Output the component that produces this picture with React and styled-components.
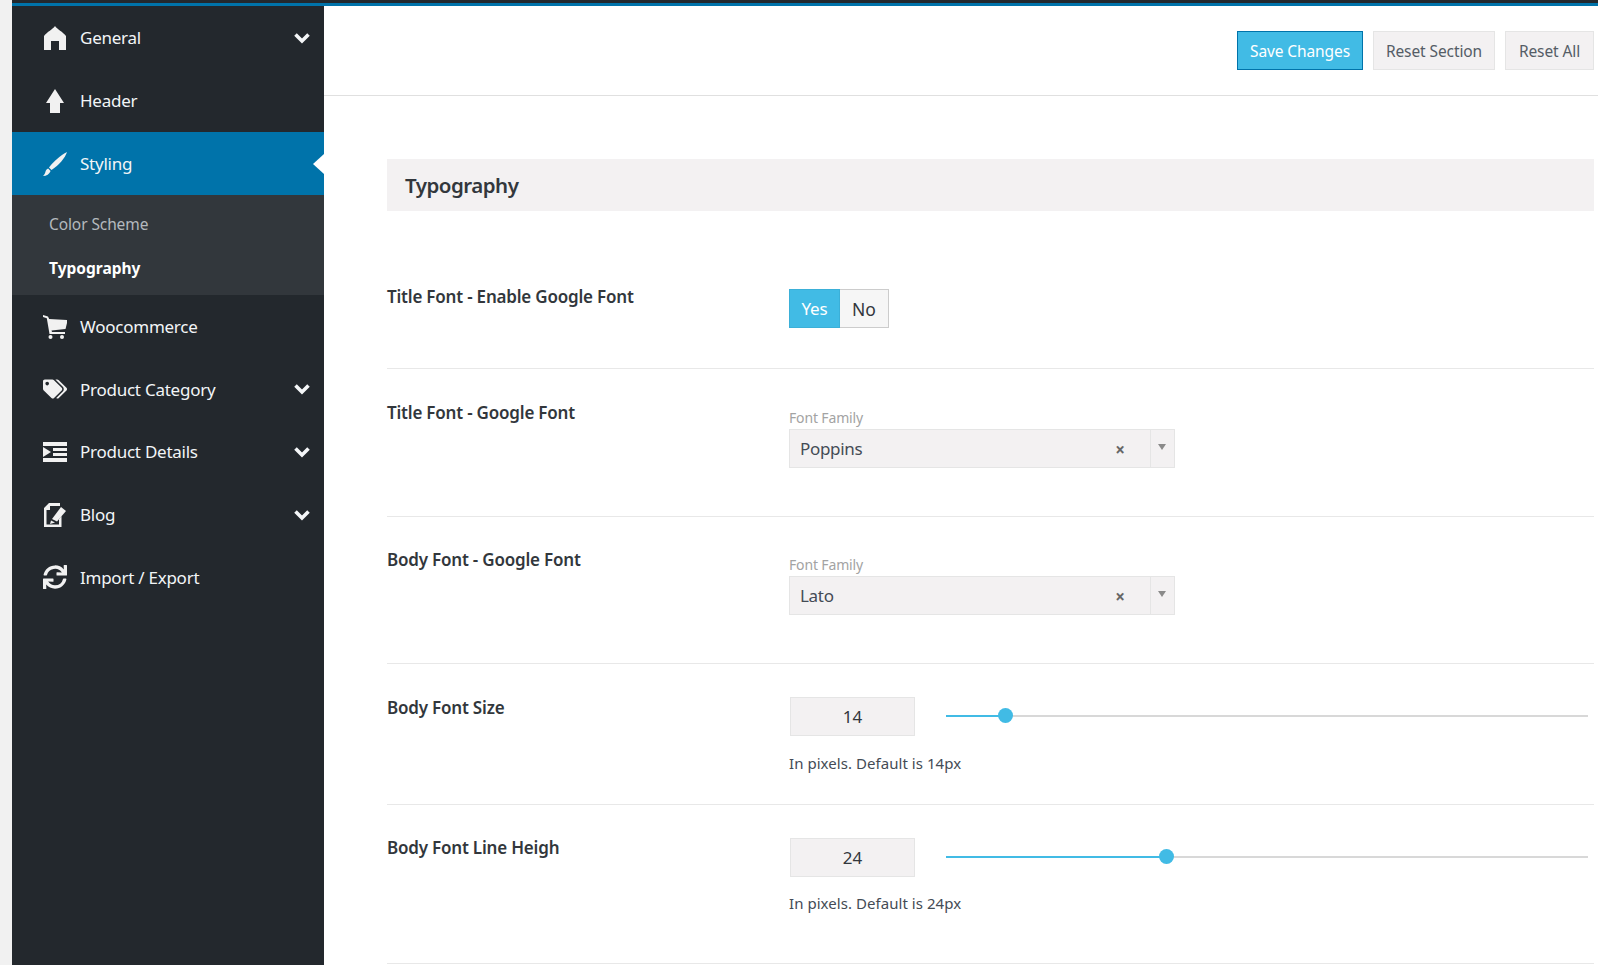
import React from "react";
import styled, { createGlobalStyle } from "styled-components";
import { FaTags, FaSync } from "react-icons/fa";

const GlobalStyle = createGlobalStyle`
  html, body {
    margin: 0;
    padding: 0;
    height: 100%;
    overflow: hidden;
    background: #f1f1f1;
    font-family: "Noto Sans", "Open Sans", sans-serif;
  }
  * { box-sizing: border-box; }
`;

const HomeIcon = () => (
  <svg width="24" height="24" viewBox="0 0 24 24" fill="currentColor">
    <path d="M12 0 C14 3 20 6 23 10 L23 24 L16 24 L16 15 L8 15 L8 24 L1 24 L1 10 C4 6 10 3 12 0 Z" />
  </svg>
);

const ArrowIcon = () => (
  <svg width="24" height="24" viewBox="0 0 24 24" fill="currentColor">
    <path d="M12 0 L21 14 L17 14 L17 24 L7 24 L7 14 L3 14 Z" />
  </svg>
);

const BrushIcon = () => (
  <svg width="24" height="24" viewBox="0 0 24 24" fill="currentColor">
    <path d="M24 0 C22 6 16 13 8.5 18 L6 15.5 C11 9 18 3 24 0 Z" />
    <path d="M5.2 16.5 L7.6 18.9 C6.5 22 3.5 24 0 24 C1.5 22.5 2 21.5 2.4 20 C2.8 18.2 3.8 17 5.2 16.5 Z" />
  </svg>
);

const CartIcon = () => (
  <svg width="24" height="24" viewBox="0 0 24 24" fill="currentColor">
    <path d="M0 0 L5 1.5 L6.2 4 L24 5 L24 8 L22.5 14 L8.5 15.5 L9 17 L22 17 L22 19 L6.5 19 L3.8 3.2 L0 2 Z" />
    <circle cx="7.5" cy="22" r="2" />
    <circle cx="19" cy="22" r="2" />
  </svg>
);

const IndentIcon = () => (
  <svg width="24" height="20" viewBox="0 0 24 20" fill="currentColor">
    <path d="M0 0 H24 V4 H0 Z" />
    <path d="M10 6 H24 V9 H10 Z" />
    <path d="M10 11 H24 V14 H10 Z" />
    <path d="M0 16 H24 V20 H0 Z" />
    <path d="M0 5 L8 10 L0 15 Z" />
  </svg>
);

const EditIcon = () => (
  <svg width="24" height="24" viewBox="0 0 24 24" fill="currentColor">
    <path d="M1 5 L6 0 L17 0 L17 3 L7 3 L7 7 L3.5 7 L3.5 21.5 L16 21.5 L16 16 L18.5 13 L18.5 24 L1 24 Z" />
    <path d="M18 4 L23 8 L14 18.5 L9 16 Z" />
    <path d="M8 17.5 L12 19.5 L7 21 Z" />
  </svg>
);

const ChevronIcon = () => (
  <svg width="16" height="12" viewBox="0 0 16 12" fill="none" stroke="currentColor" strokeWidth="3.6">
    <path d="M1.5 2.5 L8 9 L14.5 2.5" />
  </svg>
);

const menuTop = [
  { label: "General", icon: <HomeIcon />, chevron: true },
  { label: "Header", icon: <ArrowIcon /> },
];

const menuBottom = [
  { label: "Woocommerce", icon: <CartIcon /> },
  { label: "Product Category", icon: <FaTags size={24} />, chevron: true },
  { label: "Product Details", icon: <IndentIcon />, chevron: true },
  { label: "Blog", icon: <EditIcon />, chevron: true },
  { label: "Import / Export", icon: <FaSync size={24} /> },
];

const MenuRow = ({ item, active }) => (
  <MenuItem $active={active}>
    <IconSlot>{item.icon}</IconSlot>
    <MenuLabel>{item.label}</MenuLabel>
    {item.chevron && (
      <ChevronSlot>
        <ChevronIcon />
      </ChevronSlot>
    )}
  </MenuItem>
);

const FontSelect = ({ value }) => (
  <>
    <FieldCaption>Font Family</FieldCaption>
    <SelectBox>
      <SelectValue>{value}</SelectValue>
      <ClearMark>×</ClearMark>
      <SelectArrow />
    </SelectBox>
  </>
);

const Slider = ({ value, percent, help, top, gap }) => (
  <>
    <SliderRow $top={top}>
      <NumberBox>{value}</NumberBox>
      <Track>
        <TrackFill style={{ width: percent + "%" }} />
        <Thumb style={{ left: percent + "%" }} />
      </Track>
    </SliderRow>
    <HelpText $gap={gap}>{help}</HelpText>
  </>
);

export default function App() {
  return (
    <Page>
      <GlobalStyle />
      <TopBar />
      <Shell>
        <Sidebar>
          {menuTop.map((item) => (
            <MenuRow key={item.label} item={item} />
          ))}
          <MenuRow item={{ label: "Styling", icon: <BrushIcon /> }} active />
          <SubMenu>
            <SubItem>Color Scheme</SubItem>
            <SubItem $current>Typography</SubItem>
          </SubMenu>
          <BottomMenu>
            {menuBottom.map((item) => (
              <MenuRow key={item.label} item={item} />
            ))}
          </BottomMenu>
        </Sidebar>
        <Main>
          <ActionBar>
            <PrimaryButton>Save Changes</PrimaryButton>
            <PlainButton $width={122}>Reset Section</PlainButton>
            <PlainButton $width={89}>Reset All</PlainButton>
          </ActionBar>
          <Content>
            <SectionTitle>Typography</SectionTitle>
            <Option $height={158} $top={74}>
              <OptionLabel>Title Font - Enable Google Font</OptionLabel>
              <OptionField>
                <Toggle>
                  <ToggleYes>Yes</ToggleYes>
                  <ToggleNo>No</ToggleNo>
                </Toggle>
              </OptionField>
            </Option>
            <Option $height={148} $top={32}>
              <OptionLabel>Title Font - Google Font</OptionLabel>
              <OptionField>
                <FontSelect value="Poppins" />
              </OptionField>
            </Option>
            <Option $height={147} $top={31}>
              <OptionLabel>Body Font - Google Font</OptionLabel>
              <OptionField>
                <FontSelect value="Lato" />
              </OptionField>
            </Option>
            <Option $height={141} $top={32}>
              <OptionLabel>Body Font Size</OptionLabel>
              <OptionField>
                <Slider value="14" percent={9.2} top={1} gap={16} help="In pixels. Default is 14px" />
              </OptionField>
            </Option>
            <Option $height={159} $top={31}>
              <OptionLabel>Body Font Line Heigh</OptionLabel>
              <OptionField>
                <Slider value="24" percent={34.4} top={2} gap={15} help="In pixels. Default is 24px" />
              </OptionField>
            </Option>
          </Content>
        </Main>
      </Shell>
    </Page>
  );
}

const Page = styled.div`
  height: 965px;
  padding-left: 12px;
  display: flex;
  flex-direction: column;
  overflow: hidden;
`;

const TopBar = styled.div`
  height: 6px;
  flex: none;
  background: #23282d;
  border-bottom: 3px solid #0073aa;
`;

const Shell = styled.div`
  flex: 1;
  display: flex;
  min-height: 0;
`;

const Sidebar = styled.nav`
  width: 312px;
  flex: none;
  background: #23282d;
`;

const MenuItem = styled.div`
  position: relative;
  height: 63px;
  display: flex;
  align-items: center;
  padding-left: 31px;
  color: #f2f5f7;
  background: ${(p) => (p.$active ? "#0073aa" : "transparent")};

  ${(p) =>
    p.$active &&
    `
    &::after {
      content: "";
      position: absolute;
      right: 0;
      top: 50%;
      margin-top: -10px;
      border-top: 10px solid transparent;
      border-bottom: 10px solid transparent;
      border-right: 11px solid #ffffff;
    }
  `}
`;

const BottomMenu = styled.div`
  padding-top: 0.5px;

  ${MenuItem} {
    height: 62.6px;
  }
`;

const IconSlot = styled.span`
  width: 24px;
  height: 24px;
  flex: none;
  display: flex;
  align-items: center;
  justify-content: center;
  color: #f1f1f1;
`;

const MenuLabel = styled.span`
  margin-left: 13px;
  font-size: 17px;
  letter-spacing: -0.25px;
`;

const ChevronSlot = styled.span`
  margin-left: auto;
  margin-right: 14px;
  display: flex;
  color: #f4f6f8;
`;

const SubMenu = styled.div`
  height: 100px;
  padding-top: 7px;
  background: #32373c;
`;

const SubItem = styled.div`
  height: 44px;
  display: flex;
  align-items: center;
  padding-left: 37px;
  font-size: 15.5px;
  letter-spacing: ${(p) => (p.$current ? "0" : "-0.1px")};
  font-weight: ${(p) => (p.$current ? 700 : 400)};
  color: ${(p) => (p.$current ? "#ffffff" : "#b4b9be")};
`;

const Main = styled.main`
  flex: 1;
  min-width: 0;
  background: #ffffff;
`;

const ActionBar = styled.div`
  height: 90px;
  display: flex;
  justify-content: flex-end;
  gap: 10px;
  padding: 25px 4px 0 0;
  border-bottom: 1px solid #e0e0e0;
`;

const PrimaryButton = styled.div`
  width: 126px;
  height: 39px;
  display: flex;
  align-items: center;
  justify-content: center;
  background: #41bbe5;
  border: 1px solid #0073aa;
  color: #ffffff;
  font-size: 15.5px;
  letter-spacing: -0.1px;
`;

const PlainButton = styled.div`
  width: ${(p) => p.$width}px;
  height: 39px;
  display: flex;
  align-items: center;
  justify-content: center;
  background: #f3f1f2;
  border: 1px solid #e5e5e5;
  color: #555d66;
  font-size: 15.5px;
  letter-spacing: -0.1px;
`;

const Content = styled.div`
  padding: 63px 4px 0 63px;
`;

const SectionTitle = styled.h2`
  margin: 0;
  height: 52px;
  display: flex;
  align-items: center;
  padding-left: 18px;
  background: #f3f1f2;
  color: #32373c;
  font-size: 20.5px;
  font-weight: 600;
  letter-spacing: -0.5px;
`;

const Option = styled.section`
  height: ${(p) => p.$height}px;
  display: flex;
  padding-top: ${(p) => p.$top}px;
  border-bottom: 1px solid #e8e8e8;
`;

const OptionLabel = styled.div`
  width: 402px;
  flex: none;
  color: #32373c;
  font-size: 17px;
  font-weight: 600;
  letter-spacing: -0.2px;
  line-height: 24px;
`;

const OptionField = styled.div`
  flex: 1;
  min-width: 0;
`;

const Toggle = styled.div`
  display: flex;
  width: 100px;
  height: 39px;
  margin-top: 4px;
`;

const ToggleYes = styled.div`
  width: 51px;
  display: flex;
  align-items: center;
  justify-content: center;
  background: #41bbe5;
  border: 1px solid #3bb0d8;
  color: #ffffff;
  font-size: 17px;
  letter-spacing: -0.2px;
`;

const ToggleNo = styled.div`
  flex: 1;
  display: flex;
  align-items: center;
  justify-content: center;
  background: #f6f6f6;
  border: 1px solid #cccccc;
  border-left: 0;
  color: #32373c;
  font-size: 17.5px;
`;

const FieldCaption = styled.div`
  height: 21px;
  margin-top: 7px;
  color: #a3a3a3;
  font-size: 14px;
  letter-spacing: -0.15px;
  line-height: 20px;
`;

const SelectBox = styled.div`
  position: relative;
  width: 386px;
  height: 39px;
  display: flex;
  align-items: center;
  padding-left: 10px;
  background: #f3f1f2;
  border: 1px solid #e5e5e5;
  color: #444b55;
  font-size: 17px;
  letter-spacing: -0.3px;
`;

const SelectValue = styled.span`
  flex: 1;
`;

const ClearMark = styled.span`
  width: 32px;
  margin: 2px 14px 0 0;
  color: #666666;
  font-size: 17px;
  font-weight: 700;
  text-align: center;
`;

const SelectArrow = styled.span`
  width: 24px;
  height: 100%;
  border-left: 1px solid #e5e5e5;
  position: relative;

  &::after {
    content: "";
    position: absolute;
    left: 7px;
    top: 14px;
    border-left: 4px solid transparent;
    border-right: 4px solid transparent;
    border-top: 6px solid #8a8a8a;
  }
`;

const SliderRow = styled.div`
  display: flex;
  align-items: center;
  padding-left: 1px;
  margin-top: ${(p) => p.$top}px;
`;

const NumberBox = styled.div`
  width: 125px;
  height: 39px;
  flex: none;
  display: flex;
  align-items: center;
  justify-content: center;
  background: #f3f1f2;
  border: 1px solid #e5e5e5;
  color: #32373c;
  font-size: 17px;
`;

const Track = styled.div`
  position: relative;
  width: 642px;
  height: 2px;
  margin: 0 0 2px 31px;
  background: #d8d8d8;
`;

const TrackFill = styled.div`
  height: 2px;
  background: #41bbe5;
`;

const Thumb = styled.span`
  position: absolute;
  top: -6.5px;
  width: 15px;
  height: 15px;
  margin-left: -7.5px;
  border-radius: 50%;
  background: #41bbe5;
`;

const HelpText = styled.div`
  margin-top: ${(p) => p.$gap}px;
  color: #444b55;
  font-size: 15px;
  letter-spacing: 0.05px;
  line-height: 22px;
`;
